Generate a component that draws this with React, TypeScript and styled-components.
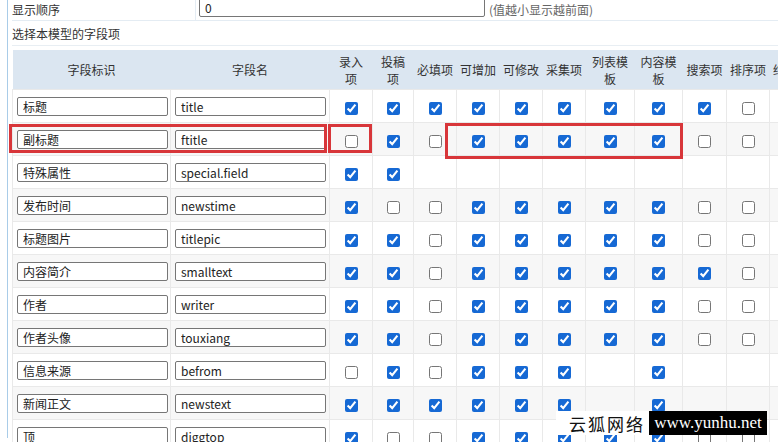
import React from 'react';
import styled, { createGlobalStyle } from 'styled-components';

type Flag = boolean | null;

interface FieldRow {
  label: string;
  name: string;
  flags: Flag[];
}

const GlobalStyle = createGlobalStyle`
  html, body {
    margin: 0;
    padding: 0;
    background: #ffffff;
    overflow: hidden;
  }
  body {
    font-family: "Noto Sans CJK SC", "Noto Sans", sans-serif;
    font-size: 12px;
    color: #333;
  }
`;

const Page = styled.div`
  position: relative;
  width: 778px;
  height: 442px;
  overflow: hidden;
  padding-left: 7px;
  box-sizing: border-box;
`;

const Frame = styled.div`
  border-left: 1px solid #a9cce8;
  padding-left: 4px;
  height: 100%;
`;

const FormRow = styled.div`
  display: flex;
  align-items: center;
  height: 24px;
  margin-top: -4px;
  border-bottom: 1px solid #e4ecf3;
`;

const LabelCell = styled.div`
  width: 183px;
  align-self: stretch;
  display: flex;
  align-items: center;
  padding-top: 2px;
  border-right: 1px solid #e4ecf3;
`;

const TextInput = styled.input<{ $width: number }>`
  width: ${p => p.$width}px;
  height: 19px;
  box-sizing: border-box;
  border: 1px solid #767676;
  border-radius: 2px;
  padding: 0 5px;
  font-family: "Noto Sans CJK SC", "Noto Sans", sans-serif;
  font-size: 12px;
  color: #222;
  background: #fff;
  outline: none;
`;

const OrderInput = styled(TextInput)`
  margin: 2px 4px 0 3px;
  align-self: flex-end;
  margin-bottom: 3px;
`;

const Hint = styled.span`
  color: #666;
  padding-top: 2px;
`;

const SectionTitle = styled.div`
  height: 24px;
  display: flex;
  align-items: center;
  border-bottom: 1px solid #e8eef3;
`;

const TableWrap = styled.div`
  position: relative;
  margin-top: 4px;
`;

const Table = styled.table`
  border-collapse: collapse;
  table-layout: fixed;
  width: 800px;
`;

const HeadCell = styled.th`
  height: 39px;
  padding: 0;
  background: #dbe6f1;
  font-weight: normal;
  line-height: 17px;
  text-align: center;
  white-space: nowrap;
  color: #333;
`;

const BodyRow = styled.tr<{ $alt: boolean }>`
  background: ${p => (p.$alt ? '#f7f7f7' : '#ffffff')};
`;

const Cell = styled.td`
  height: 32px;
  padding: 0;
  border: 1px solid #e9e9e9;
  text-align: center;
  vertical-align: middle;
`;

const InputCell = styled(Cell)`
  text-align: left;
  padding-left: 4px;
`;

const Check = styled.input`
  width: 13px;
  height: 13px;
  margin: 0;
  vertical-align: middle;
  accent-color: #1669d4;
`;

const Mark = styled.div<{ $left: number; $top: number; $w: number; $h: number }>`
  position: absolute;
  left: ${p => p.$left}px;
  top: ${p => p.$top}px;
  width: ${p => p.$w}px;
  height: ${p => p.$h}px;
  box-sizing: border-box;
  border: 3px solid #d8363a;
  pointer-events: none;
`;

const Watermark = styled.div`
  position: absolute;
  left: 556px;
  top: 411px;
  display: flex;
  height: 24px;
`;

const WaterName = styled.div`
  width: 93px;
  background: #fff;
  display: flex;
  align-items: center;
  justify-content: flex-end;
  padding-right: 4px;
  box-sizing: border-box;
  font-size: 17px;
  letter-spacing: 2px;
  color: #111;
`;

const WaterUrl = styled.div`
  width: 118px;
  background: #000;
  color: #fff;
  display: flex;
  align-items: center;
  justify-content: center;
  font-family: "Liberation Serif", serif;
  font-size: 17px;
`;

const columns: { title: React.ReactNode; width: number }[] = [
  { title: '字段标识', width: 158 },
  { title: '字段名', width: 159 },
  { title: <>录入<br />项</>, width: 43 },
  { title: <>投稿<br />项</>, width: 41 },
  { title: '必填项', width: 43 },
  { title: '可增加', width: 43 },
  { title: '可修改', width: 43 },
  { title: '采集项', width: 43 },
  { title: <>列表模<br />板</>, width: 49 },
  { title: <>内容模<br />板</>, width: 48 },
  { title: '搜索项', width: 44 },
  { title: '排序项', width: 43 },
  { title: '结合项', width: 43 },
];

const T = true;
const F = false;
const N = null;

const rows: FieldRow[] = [
  { label: '标题', name: 'title', flags: [T, T, T, T, T, T, T, T, T, F, N] },
  { label: '副标题', name: 'ftitle', flags: [F, T, F, T, T, T, T, T, F, F, N] },
  { label: '特殊属性', name: 'special.field', flags: [T, T, N, N, N, N, N, N, N, N, N] },
  { label: '发布时间', name: 'newstime', flags: [T, F, F, T, T, T, T, T, F, F, N] },
  { label: '标题图片', name: 'titlepic', flags: [T, T, F, T, T, T, T, T, F, F, N] },
  { label: '内容简介', name: 'smalltext', flags: [T, T, F, T, T, T, T, T, T, F, N] },
  { label: '作者', name: 'writer', flags: [T, T, F, T, T, T, T, T, F, F, N] },
  { label: '作者头像', name: 'touxiang', flags: [T, T, F, T, T, T, T, T, F, F, N] },
  { label: '信息来源', name: 'befrom', flags: [F, T, F, T, T, T, N, T, N, N, N] },
  { label: '新闻正文', name: 'newstext', flags: [T, T, T, T, T, T, N, T, N, N, N] },
  { label: '顶', name: 'diggtop', flags: [T, F, F, T, T, T, T, T, F, F, N] },
];

const App: React.FC = () => {
  return (
    <Page>
      <GlobalStyle />
      <Frame>
        <FormRow>
          <LabelCell>显示顺序</LabelCell>
          <OrderInput $width={286} defaultValue="0" />
          <Hint>(值越小显示越前面)</Hint>
        </FormRow>
        <SectionTitle>选择本模型的字段项</SectionTitle>

        <TableWrap>
          <Table>
            <colgroup>
              {columns.map((c, i) => (
                <col key={i} style={{ width: c.width }} />
              ))}
            </colgroup>
            <thead>
              <tr>
                {columns.map((c, i) => (
                  <HeadCell key={i}>{c.title}</HeadCell>
                ))}
              </tr>
            </thead>
            <tbody>
              {rows.map((r, i) => (
                <BodyRow key={r.name} $alt={i % 2 === 1}>
                  <InputCell>
                    <TextInput $width={151} defaultValue={r.label} />
                  </InputCell>
                  <InputCell>
                    <TextInput $width={151} defaultValue={r.name} />
                  </InputCell>
                  {r.flags.map((f, j) => (
                    <Cell key={j}>
                      {f !== null && <Check type="checkbox" defaultChecked={f} />}
                    </Cell>
                  ))}
                </BodyRow>
              ))}
            </tbody>
          </Table>

          <Mark $left={-3} $top={74} $w={318} $h={29} />
          <Mark $left={316} $top={74} $w={44} $h={29} />
          <Mark $left={433} $top={73} $w={238} $h={36} />
        </TableWrap>
      </Frame>

      <Watermark>
        <WaterName>云狐网络</WaterName>
        <WaterUrl>www.yunhu.net</WaterUrl>
      </Watermark>
    </Page>
  );
};

export default App;
